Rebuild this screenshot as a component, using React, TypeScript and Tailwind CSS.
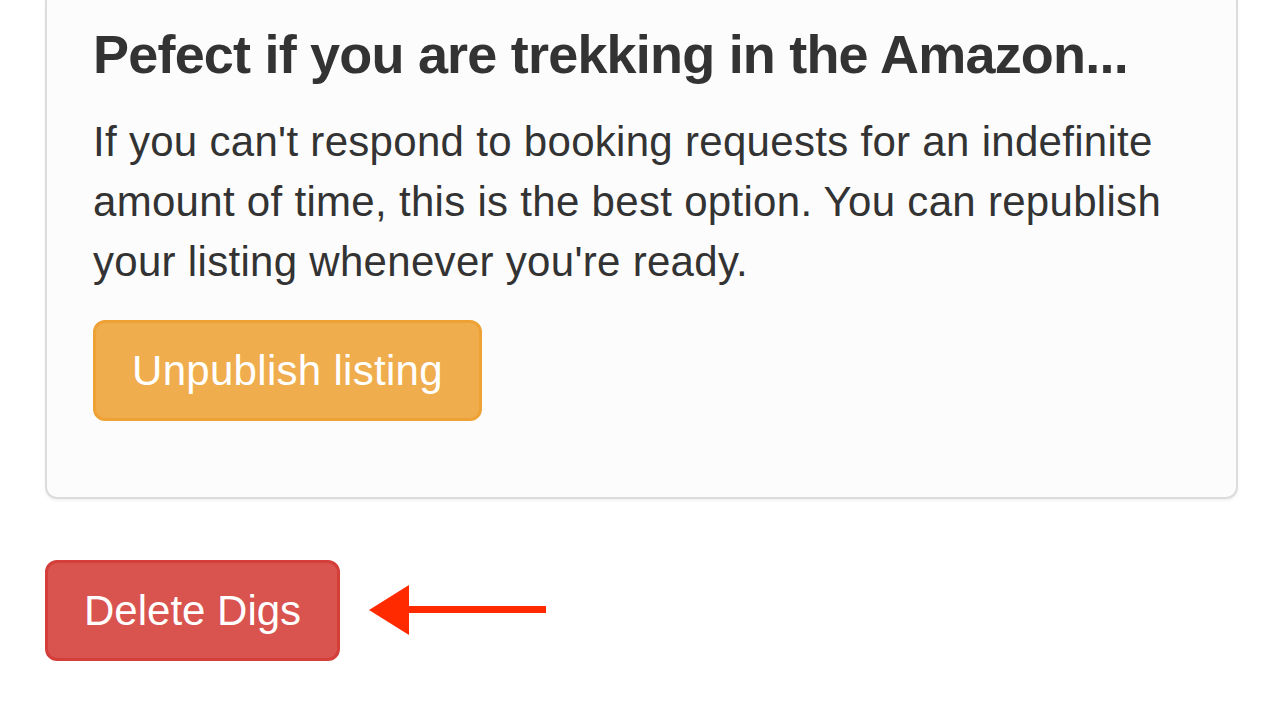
import React from "react";

export default function App() {
  return (
    <div
      className="min-h-screen bg-white px-[45px] text-[#333]"
      style={{ fontFamily: '"Liberation Sans", Arial, Helvetica, sans-serif' }}
    >
      <div className="rounded-b-[12px] border-2 border-t-0 border-[#dcdcdc] bg-[#fcfcfc] px-[46px] pt-[25px] pb-[76px] shadow-[0_2px_3px_rgba(0,0,0,0.05)]">
        <h4 className="m-0 text-[54px] font-bold leading-[1.1] tracking-[-0.8px] text-[#333]">
          Pefect if you are trekking in the Amazon...
        </h4>
        <p className="mt-[28px] mb-[28px] text-[42px] leading-[60px] tracking-[0.3px] text-[#333]">
          If you can't respond to booking requests for an indefinite amount of time, this is the best option. You can republish your listing whenever you're ready.
        </p>
        <button className="rounded-[12px] border-[3px] border-[#eea236] bg-[#f0ad4e] px-[36px] py-[18px] text-[42px] leading-[59px] tracking-[0.3px] text-white">
          Unpublish listing
        </button>
      </div>
      <div className="mt-[61px] flex items-center gap-[29px]">
        <button className="rounded-[12px] border-[3px] border-[#d43f3a] bg-[#d9534f] px-[36px] py-[18px] text-[42px] leading-[59px] text-white">
          Delete Digs
        </button>
        <svg width="178" height="52" viewBox="0 0 178 52" className="mt-[-2px]">
          <polygon points="0,26 40,1 40,51" fill="#ff2a00" />
          <rect x="39" y="22" width="138" height="7" fill="#ff2a00" />
        </svg>
      </div>
    </div>
  );
}
